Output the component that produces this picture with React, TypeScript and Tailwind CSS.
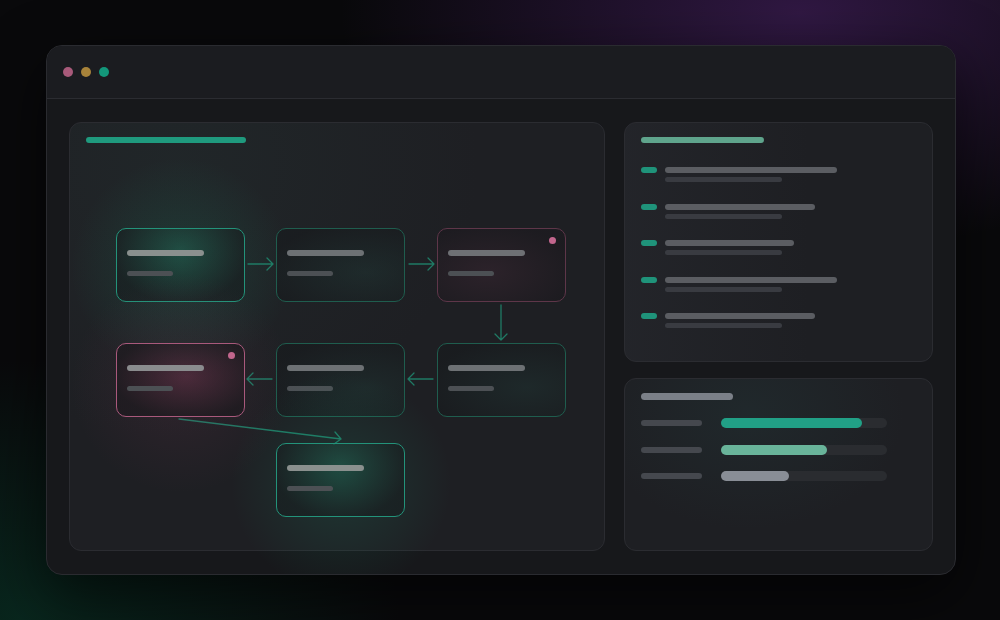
import React from 'react';

type Tone = 'greenHot' | 'green' | 'pink' | 'pinkHot';

const nodes: { pos: string; tone: Tone; dot?: boolean }[] = [
  { pos: 'left-[46px] top-[105px]', tone: 'greenHot' },
  { pos: 'left-[206px] top-[105px]', tone: 'green' },
  { pos: 'left-[367px] top-[105px]', tone: 'pink', dot: true },
  { pos: 'left-[46px] top-[220px]', tone: 'pinkHot', dot: true },
  { pos: 'left-[206px] top-[220px]', tone: 'green' },
  { pos: 'left-[367px] top-[220px]', tone: 'green' },
  { pos: 'left-[206px] top-[320px]', tone: 'greenHot' },
];

const toneStyles: Record<Tone, { box: string; glow?: string; bar: string }> = {
  greenHot: {
    box: 'border-[#23937a] bg-[radial-gradient(ellipse_at_50%_30%,rgba(34,120,96,0.35),rgba(24,30,32,0.65)_75%)]',
    glow: 'bg-[radial-gradient(circle,rgba(30,150,115,0.2),transparent_62%)]',
    bar: 'bg-[#8a908e]',
  },
  green: {
    box: 'border-[#1f5d4e] bg-[radial-gradient(ellipse_at_70%_60%,rgba(30,80,70,0.2),rgba(24,27,30,0.75)_80%)]',
    bar: 'bg-[#6d7174]',
  },
  pink: {
    box: 'border-[#5e3649] bg-[radial-gradient(ellipse_at_40%_60%,rgba(70,40,55,0.35),rgba(28,26,31,0.75)_80%)]',
    bar: 'bg-[#6e7074]',
  },
  pinkHot: {
    box: 'border-[#a9597c] bg-[radial-gradient(ellipse_at_55%_45%,rgba(110,50,75,0.45),rgba(30,26,31,0.75)_75%)]',
    glow: 'bg-[radial-gradient(circle,rgba(140,60,95,0.16),transparent_62%)]',
    bar: 'bg-[#8a8c8e]',
  },
};

const Node = ({ pos, tone, dot }: { pos: string; tone: Tone; dot?: boolean }) => {
  const s = toneStyles[tone];
  return (
    <div className={`absolute ${pos} w-[129px] h-[74px]`}>
      {s.glow && <div className={`absolute -left-[70px] -top-[75px] w-[270px] h-[230px] ${s.glow}`} />}
      <div className={`relative h-full w-full rounded-[10px] border ${s.box} px-[10px] pt-[21px]`}>
        <div className={`h-[6px] w-[77px] rounded-full ${s.bar}`} />
        <div className="mt-[15px] h-[5px] w-[46px] rounded-full bg-[#4c5054]" />
        {dot && <div className="absolute right-[9px] top-[8px] h-[7px] w-[7px] rounded-full bg-[#c2668d]" />}
      </div>
    </div>
  );
};

const Arrows = () => (
  <svg className="pointer-events-none absolute inset-0 h-full w-full" fill="none" stroke="#1f7a64" strokeWidth="1.3" strokeLinecap="round" strokeLinejoin="round">
    {/* row 1 rightward */}
    <path d="M178 141 H203 M197 135 L203 141 L197 147" />
    <path d="M339 141 H364 M358 135 L364 141 L358 147" />
    {/* down */}
    <path d="M431 182 V217 M425 211 L431 217 L437 211" />
    {/* row 2 leftward */}
    <path d="M363 256 H338 M344 250 L338 256 L344 262" />
    <path d="M202 256 H177 M183 250 L177 256 L183 262" />
    {/* diagonal */}
    <path d="M109 296 L271 316 M265 309 L271 316 L264 321" />
  </svg>
);

const listRows = [172, 150, 129, 172, 150];
const bars = [
  { pct: 85, color: 'bg-[#21a086]' },
  { pct: 64, color: 'bg-[#69b49a]' },
  { pct: 41, color: 'bg-[#898e96]' },
];

export default function App() {
  return (
    <div className="flex h-[620px] w-full items-center justify-center bg-[#09090b] bg-[image:radial-gradient(ellipse_460px_240px_at_80%_2%,rgba(80,36,112,0.55),transparent),radial-gradient(ellipse_380px_260px_at_2%_100%,rgba(8,62,44,0.55),transparent)] font-['Inter',sans-serif]">
      <div className="ml-[2px] flex h-[530px] w-[910px] flex-col overflow-hidden rounded-[16px] border border-[#2a2b30] bg-[#17181b] shadow-[0_20px_60px_rgba(0,0,0,0.6)]">
        {/* title bar */}
        <div className="flex h-[53px] shrink-0 items-center gap-[8px] border-b border-[#2b2c31] bg-[#1b1c20] px-[16px]">
          <div className="h-[10px] w-[10px] rounded-full bg-[#a85a7a]" />
          <div className="h-[10px] w-[10px] rounded-full bg-[#a8833a]" />
          <div className="h-[10px] w-[10px] rounded-full bg-[#13977a]" />
        </div>

        <div className="flex flex-1 gap-[19px] px-[22px] py-[23px]">
          {/* diagram panel */}
          <div className="relative flex-1 rounded-[12px] border border-[#2b2c31] bg-[#1e1f23] bg-[image:radial-gradient(ellipse_at_20%_10%,rgba(40,60,58,0.25),transparent_50%)]">
            <div className="ml-[16px] mt-[14px] h-[6px] w-[160px] rounded-full bg-[#1f9a7e]" />
            <Arrows />
            {nodes.map((n, i) => (
              <Node key={i} {...n} />
            ))}
          </div>

          {/* right column */}
          <div className="flex w-[309px] flex-col gap-[16px]">
            <div className="h-[240px] rounded-[12px] border border-[#2b2c31] bg-[#1e1f23] bg-[image:linear-gradient(90deg,rgba(40,42,48,0.5),transparent_60%)] px-[16px] pt-[14px]">
              <div className="h-[6px] w-[123px] rounded-full bg-[#5fa48c]" />
              <div className="mt-[24px] flex flex-col gap-[21.5px]">
                {listRows.map((w, i) => (
                  <div key={i} className="flex gap-[8px]">
                    <div className="h-[6px] w-[16px] rounded-full bg-[#1f937a]" />
                    <div className="flex flex-col gap-[4px]">
                      <div className="h-[6px] rounded-full bg-[#5b5d62]" style={{ width: w }} />
                      <div className="h-[5px] w-[117px] rounded-full bg-[#393b41]" />
                    </div>
                  </div>
                ))}
              </div>
            </div>

            <div className="flex-1 rounded-[12px] border border-[#2b2c31] bg-[#1e1f23] bg-[image:radial-gradient(ellipse_at_40%_20%,rgba(36,58,60,0.35),transparent_60%)] px-[16px] pt-[14px]">
              <div className="h-[7px] w-[92px] rounded-full bg-[#7b8088]" />
              <div className="mt-[18px] flex flex-col gap-[16.5px]">
                {bars.map((b, i) => (
                  <div key={i} className="flex items-center gap-[19px]">
                    <div className="h-[6px] w-[61px] rounded-full bg-[#45484e]" />
                    <div className="h-[10px] w-[166px] rounded-full bg-[#2a2c30]">
                      <div className={`h-full rounded-full ${b.color}`} style={{ width: `${b.pct}%` }} />
                    </div>
                  </div>
                ))}
              </div>
            </div>
          </div>
        </div>
      </div>
    </div>
  );
}
